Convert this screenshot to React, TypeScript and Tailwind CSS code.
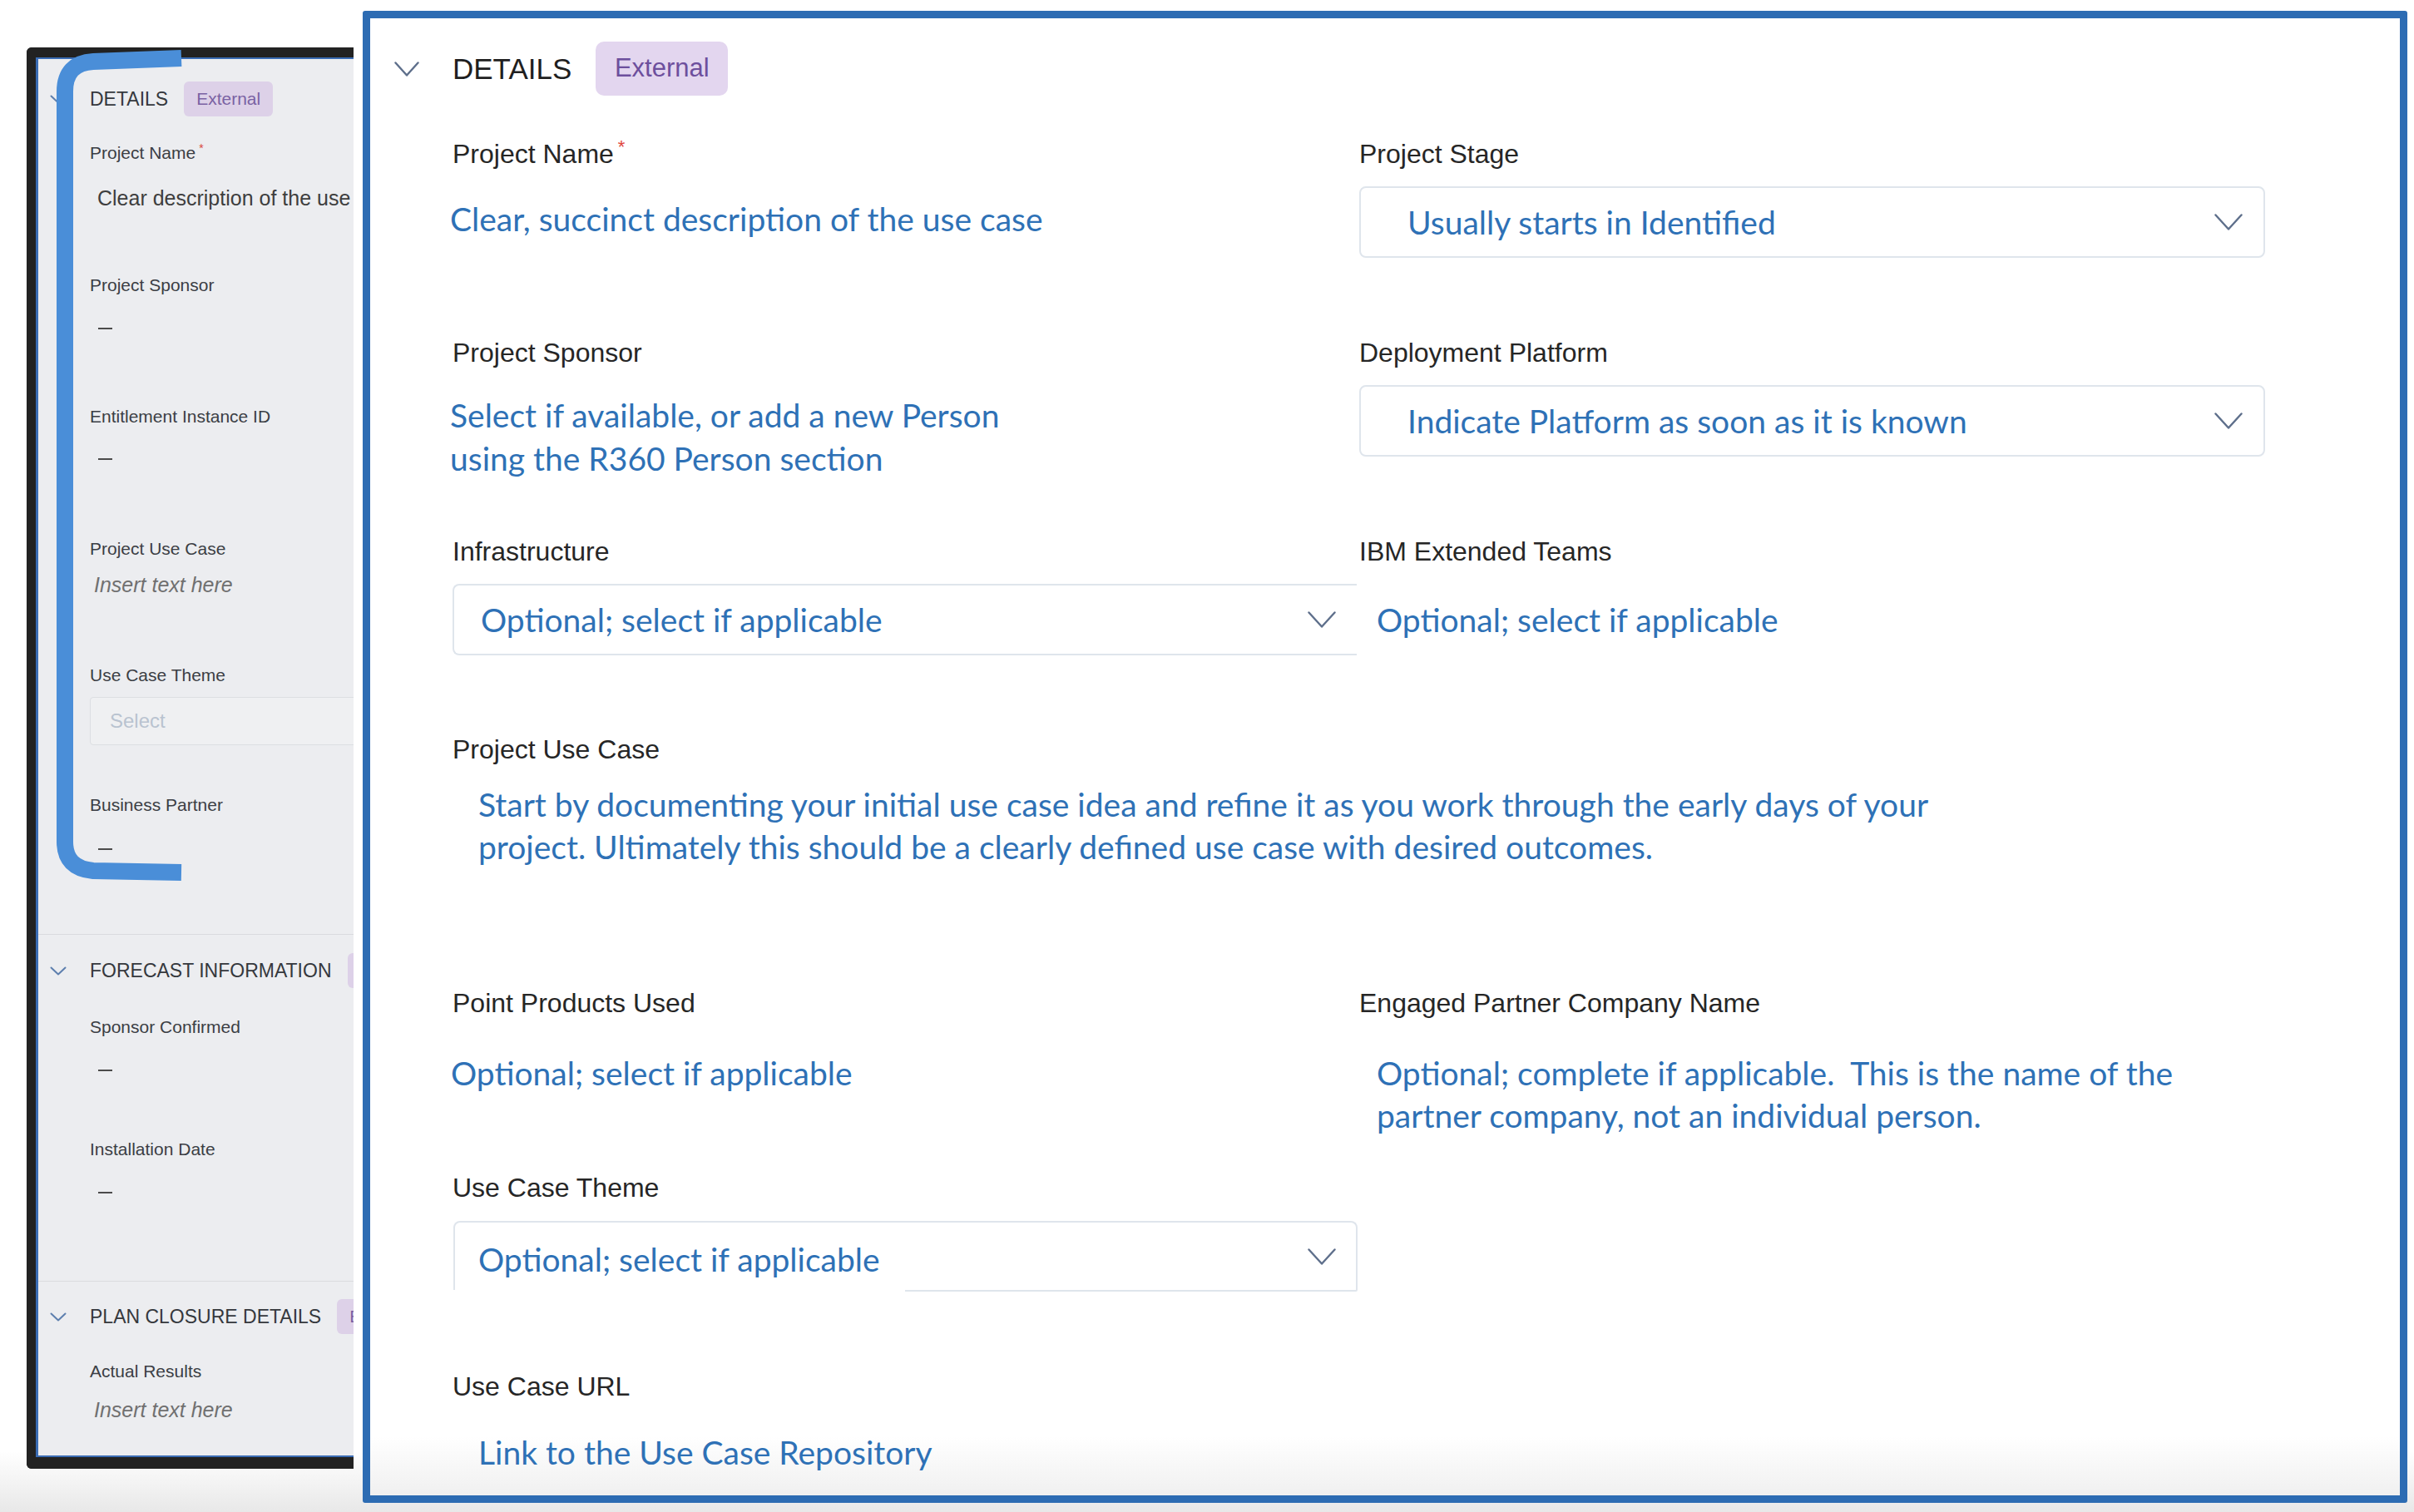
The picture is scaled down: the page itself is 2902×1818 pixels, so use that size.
import React from 'react';

const LABEL = "font-['Liberation_Sans',Arial,sans-serif] text-[32px] leading-[40px] text-[#262626] whitespace-nowrap";
const VALUE = "font-['Lato',sans-serif] text-[39px] text-[#2e71b6] whitespace-nowrap";
const BOX_BORDER = 'border-[#dfe5ec]';

const SIDE_LABEL = "font-['Liberation_Sans',Arial,sans-serif] text-[21px] leading-[28px] text-[#3b3e44] whitespace-nowrap";
const SIDE_HEAD = "font-['Liberation_Sans',Arial,sans-serif] text-[23px] leading-[28px] text-[#35383d] whitespace-nowrap";
const SIDE_VALUE = "font-['Liberation_Sans',Arial,sans-serif] text-[25px] leading-[32px] whitespace-nowrap";

function Chevron({ w, h, color, stroke }: { w: number; h: number; color: string; stroke: number }) {
  return (
    <svg width={w} height={h} viewBox={`0 0 ${w} ${h}`} fill="none" className="shrink-0">
      <polyline
        points={`1.5,1.5 ${w / 2},${h - 1.5} ${w - 1.5},1.5`}
        stroke={color}
        strokeWidth={stroke}
        strokeLinecap="round"
        strokeLinejoin="round"
      />
    </svg>
  );
}

function Dash({ className = '' }: { className?: string }) {
  return <div className={`ml-[10px] h-[2px] w-[17px] bg-[#4b4b4b] ${className}`} />;
}

function SideSection({ title, badge, className = '' }: { title: string; badge: string; className?: string }) {
  return (
    <div className={`-ml-[48px] flex h-[42px] items-center ${className}`}>
      <Chevron w={20} h={11} color="#5d7fae" stroke={2} />
      <span className={`ml-[28px] ${SIDE_HEAD}`}>{title}</span>
      <span className="ml-[19px] flex h-[42px] items-center rounded-[6px] bg-[#ddd1e8] px-[15px] font-['Liberation_Sans',Arial,sans-serif] text-[21px] text-[#7a62a3]">
        {badge}
      </span>
    </div>
  );
}

// the cropped screenshot on the left
function SidePanel() {
  return (
    <div className="mt-[57px] h-[1709px] w-[393px] shrink-0 overflow-hidden rounded-l-[6px] border-t-[12px] border-b-[14px] border-l-[11px] border-[#222222]">
      <div className="h-full w-[600px] border-t-2 border-b-2 border-l-[3px] border-[#3a6cb4] bg-[#ecedf0] pl-[62px]">
        <SideSection title="DETAILS" badge="External" className="mt-[27px]" />

        <div className={`mt-[30px] ${SIDE_LABEL}`}>
          Project Name<span className="relative -top-[8px] ml-[4px] text-[14px] text-[#d9453b]">*</span>
        </div>
        <div className={`mt-[22px] ml-[9px] text-[#3e3e3e] ${SIDE_VALUE}`}>Clear description of the use case</div>

        <div className={`mt-[75px] ${SIDE_LABEL}`}>Project Sponsor</div>
        <Dash className="mt-[37px]" />

        <div className={`mt-[91px] ${SIDE_LABEL}`}>Entitlement Instance ID</div>
        <Dash className="mt-[36px]" />

        <div className={`mt-[93px] ${SIDE_LABEL}`}>Project Use Case</div>
        <div className={`mt-[13px] ml-[5px] italic text-[#707070] ${SIDE_VALUE}`}>Insert text here</div>

        <div className={`mt-[79px] ${SIDE_LABEL}`}>Use Case Theme</div>
        <div className="mt-[12px] flex h-[58px] w-[400px] items-center rounded-[4px] border border-[#dcdee2] bg-[#eff0f2] pl-[23px] font-['Liberation_Sans',Arial,sans-serif] text-[24px] text-[#b9c3d0]">
          Select
        </div>

        <div className={`mt-[58px] ${SIDE_LABEL}`}>Business Partner</div>
        <Dash className="mt-[38px]" />

        <div className="mt-[101px] -ml-[62px] h-px bg-[#dadbdf]" />
        <SideSection title="FORECAST INFORMATION" badge="External" className="mt-[22px]" />

        <div className={`mt-[33px] ${SIDE_LABEL}`}>Sponsor Confirmed</div>
        <Dash className="mt-[37px]" />

        <div className={`mt-[80px] ${SIDE_LABEL}`}>Installation Date</div>
        <Dash className="mt-[37px]" />

        <div className="mt-[105px] -ml-[62px] h-px bg-[#dadbdf]" />
        <SideSection title="PLAN CLOSURE DETAILS" badge="External" className="mt-[21px]" />

        <div className={`mt-[31px] ${SIDE_LABEL}`}>Actual Results</div>
        <div className={`mt-[16px] ml-[5px] italic text-[#707070] ${SIDE_VALUE}`}>Insert text here</div>
      </div>
    </div>
  );
}

function SelectBox({ text, className = '' }: { text: string; className?: string }) {
  return (
    <div
      className={`flex h-[86px] w-[1089px] items-center justify-between rounded-[8px] border-2 ${BOX_BORDER} pl-[56px] pr-[25px] ${className}`}
    >
      <span className={`${VALUE} leading-[50px]`}>{text}</span>
      <Chevron w={34} h={20} color="#5e6f8b" stroke={2.4} />
    </div>
  );
}

function Field({ label, children, required }: { label: string; children?: React.ReactNode; required?: boolean }) {
  return (
    <div>
      <div className={LABEL}>
        {label}
        {required && <span className="relative -top-[12px] ml-[5px] text-[22px] text-[#e0473d]">*</span>}
      </div>
      {children}
    </div>
  );
}

export default function App() {
  return (
    <div className="relative flex h-[1818px] w-[2902px] items-start overflow-hidden bg-[linear-gradient(to_bottom,#ffffff_0px,#ffffff_1745px,#e8e8e8_1818px)] pl-[32px]">
      <SidePanel />

      <div className="ml-[11px] mt-[13px] h-[1794px] w-[2458px] shrink-0 rounded-[3px] border-[9px] border-[#2d6cb3] bg-[linear-gradient(to_bottom,#ffffff_0%,#ffffff_96%,#f0f0f0_100%)] pl-[99px]">
        {/* header */}
        <div className="-ml-[70px] mt-[28px] flex h-[65px] items-center">
          <Chevron w={30} h={18} color="#5e6f8b" stroke={2.4} />
          <span className="ml-[40px] font-['Liberation_Sans',Arial,sans-serif] text-[35px] leading-[40px] text-[#1f1f1f]">
            DETAILS
          </span>
          <span className="ml-[29px] flex h-[65px] w-[159px] items-center justify-center rounded-[10px] bg-[#e3d6ef] font-['Liberation_Sans',Arial,sans-serif] text-[31px] text-[#6d4f9d]">
            External
          </span>
        </div>

        {/* row 1 */}
        <div className="mt-[50px] grid h-[239px] grid-cols-[1090px_1089px]">
          <Field label="Project Name" required>
            <div className={`${VALUE} -ml-[3px] mt-[29px] leading-[50px]`}>Clear, succinct description of the use case</div>
          </Field>
          <Field label="Project Stage">
            <SelectBox className="mt-[19px]" text="Usually starts in Identified" />
          </Field>
        </div>

        {/* row 2 */}
        <div className="grid h-[239px] grid-cols-[1090px_1089px]">
          <Field label="Project Sponsor">
            <div className={`${VALUE} -ml-[3px] mt-[29px] leading-[52px]`}>
              Select if available, or add a new Person
              <br />
              using the R360 Person section
            </div>
          </Field>
          <Field label="Deployment Platform">
            <SelectBox className="mt-[19px]" text="Indicate Platform as soon as it is known" />
          </Field>
        </div>

        {/* row 3 */}
        <div className="grid h-[238px] grid-cols-[1090px_1089px]">
          <Field label="Infrastructure">
            <div className={`mt-[19px] flex h-[86px] w-[1087px] items-center justify-between rounded-l-[8px] border-y-2 border-l-2 ${BOX_BORDER} pl-[32px] pr-[25px]`}>
              <span className={`${VALUE} leading-[50px]`}>Optional; select if applicable</span>
              <Chevron w={34} h={20} color="#5e6f8b" stroke={2.4} />
            </div>
          </Field>
          <Field label="IBM Extended Teams">
            <div className="mt-[19px] flex h-[86px] items-center pl-[21px]">
              <span className={`${VALUE} leading-[50px]`}>Optional; select if applicable</span>
            </div>
          </Field>
        </div>

        {/* row 4 */}
        <div className="h-[305px]">
          <Field label="Project Use Case">
            <div className={`${VALUE} ml-[31px] mt-[21px] leading-[51px]`}>
              Start by documenting your initial use case idea and refine it as you work through the early days of your
              <br />
              project. Ultimately this should be a clearly defined use case with desired outcomes.
            </div>
          </Field>
        </div>

        {/* row 5 */}
        <div className="grid h-[222px] grid-cols-[1090px_1089px]">
          <Field label="Point Products Used">
            <div className={`${VALUE} -ml-[2px] mt-[39px] leading-[51px]`}>Optional; select if applicable</div>
          </Field>
          <Field label="Engaged Partner Company Name">
            <div className={`${VALUE} ml-[21px] mt-[39px] leading-[51px] whitespace-pre`}>
              {'Optional; complete if applicable.  This is the name of the'}
              <br />
              partner company, not an individual person.
            </div>
          </Field>
        </div>

        {/* row 6 */}
        <div className="grid h-[239px] grid-cols-[1090px_1089px]">
          <Field label="Use Case Theme">
            <div className="ml-[1px] mt-[20px] flex h-[85px] w-[1087px] flex-col">
              <div className={`flex flex-1 items-start justify-between rounded-t-[8px] border-x-2 border-t-2 ${BOX_BORDER} pl-[28px] pr-[24px]`}>
                <span className={`${VALUE} mt-[19px] leading-[50px]`}>Optional; select if applicable</span>
                <div className="self-center">
                  <Chevron w={34} h={20} color="#5e6f8b" stroke={2.4} />
                </div>
              </div>
              <div className="ml-[543px] h-[2px] rounded-br-[4px] bg-[#dfe5ec]" />
            </div>
          </Field>
          <div />
        </div>

        {/* row 7 */}
        <Field label="Use Case URL">
          <div className={`${VALUE} ml-[31px] mt-[34px] leading-[50px]`}>Link to the Use Case Repository</div>
        </Field>
      </div>

      {/* hand-drawn bracket over the left screenshot */}
      <svg className="pointer-events-none absolute left-0 top-0" width="460" height="1100" viewBox="0 0 460 1100" fill="none">
        <path
          d="M218 70 L112 74 Q78 76 78 110 L78 1012 Q78 1044 112 1047 L218 1049"
          stroke="#4a8ed8"
          strokeWidth="20"
          strokeLinejoin="round"
        />
      </svg>
    </div>
  );
}
